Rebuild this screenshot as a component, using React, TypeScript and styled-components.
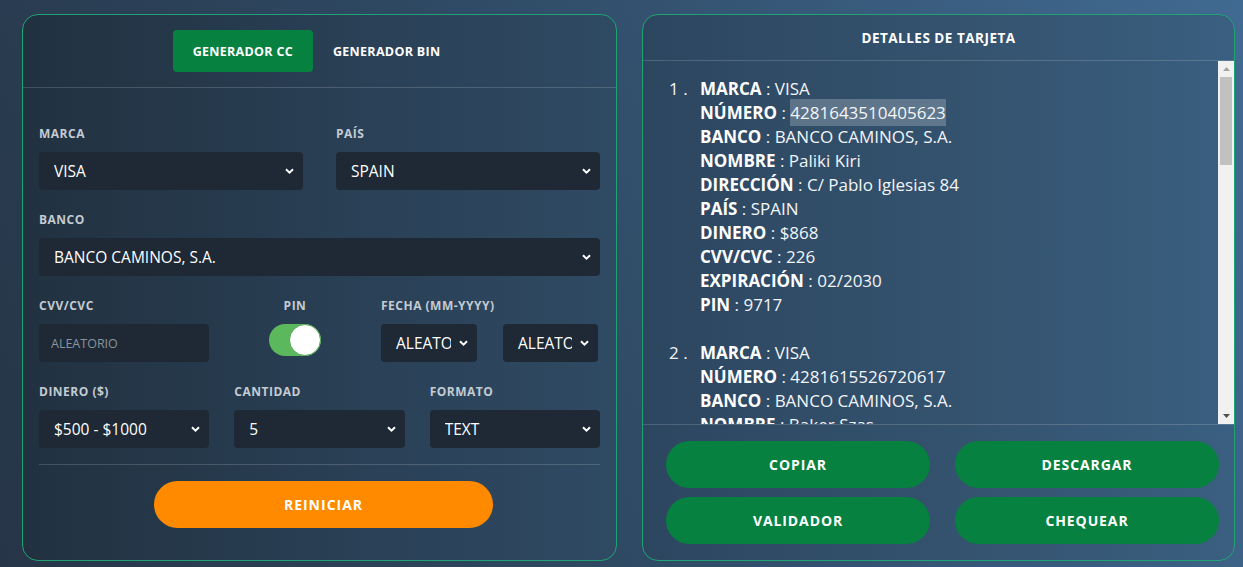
import React from "react";
import styled, { createGlobalStyle } from "styled-components";

const GlobalStyle = createGlobalStyle`
  html, body {
    margin: 0;
    padding: 0;
  }
  body {
    width: 1243px;
    height: 567px;
    overflow: hidden;
    font-family: "Open Sans", "Noto Sans", sans-serif;
    color: #fff;
    background: linear-gradient(70deg, #263547 0%, #2f4a64 45%, #416a92 100%);
  }
`;

const Page = styled.div`
  display: grid;
  grid-template-columns: 595px 593px;
  gap: 25px;
  padding: 14px 8px 6px 22px;
  height: 547px;
`;

const Panel = styled.section<{ $tone: "dark" | "light" }>`
  display: flex;
  flex-direction: column;
  border: 1px solid #1fa374;
  border-radius: 16px;
  overflow: hidden;
  background: ${(p) =>
    p.$tone === "dark"
      ? "linear-gradient(90deg, #213140 0%, #2a4157 60%, #2f4a63 100%)"
      : "linear-gradient(90deg, #2d4660 0%, #34536f 55%, #3a5f80 100%)"};
`;

const Tabs = styled.div`
  display: flex;
  justify-content: center;
  align-items: center;
  height: 72px;
  padding-right: 6px;
  border-bottom: 1px solid rgba(255, 255, 255, 0.16);
`;

const Tab = styled.button<{ $active?: boolean }>`
  height: 42px;
  padding: 0 20px;
  border: none;
  border-radius: 4px;
  background: ${(p) => (p.$active ? "#068140" : "transparent")};
  color: #fff;
  font-family: inherit;
  font-size: 12.5px;
  font-weight: 700;
  letter-spacing: 0.3px;
`;

const Form = styled.div`
  display: flex;
  flex-direction: column;
  gap: 23px;
  padding: 39px 16px 0 16px;
`;

const Row = styled.div<{ $cols: string; $gap?: number }>`
  display: grid;
  grid-template-columns: ${(p) => p.$cols};
  column-gap: ${(p) => p.$gap ?? 25}px;
`;

const Field = styled.div<{ $center?: boolean }>`
  display: flex;
  flex-direction: column;
  align-items: ${(p) => (p.$center ? "center" : "stretch")};
  gap: 11px;
  min-width: 0;
`;

const Label = styled.label`
  font-size: 12px;
  font-weight: 700;
  letter-spacing: 0.5px;
  color: #c3cbd3;
  line-height: 14px;
`;

const SelectWrap = styled.div`
  position: relative;
  min-width: 0;
`;

const Select = styled.select`
  appearance: none;
  width: 100%;
  height: 38px;
  border: none;
  border-radius: 4px;
  background: #1e2935;
  color: #fff;
  font-family: inherit;
  font-size: 15.5px;
  padding: 0 26px 0 15px;
  outline: none;
`;

const Chevron = styled.svg`
  position: absolute;
  right: 9px;
  top: 16px;
  width: 9px;
  height: 6px;
  pointer-events: none;
`;

const Input = styled.input`
  height: 38px;
  border: none;
  border-radius: 4px;
  background: #1e2935;
  color: #fff;
  font-family: inherit;
  font-size: 12.5px;
  padding: 0 12px;
  box-sizing: border-box;
  width: 100%;
  outline: none;
  &::placeholder {
    color: #8a949e;
  }
`;

const DatePair = styled.div`
  display: grid;
  grid-template-columns: 96px 95px;
  column-gap: 26px;
`;

const Toggle = styled.div<{ $on: boolean }>`
  position: relative;
  width: 52px;
  height: 32px;
  border-radius: 16px;
  background: ${(p) => (p.$on ? "#5cb85c" : "#555")};
`;

const Knob = styled.span`
  position: absolute;
  right: 0;
  top: 0;
  width: 30px;
  height: 30px;
  border-radius: 50%;
  background: #fff;
  border: 1px solid #4fa54f;
`;

const Divider = styled.hr`
  margin: -7px 0 0;
  border: none;
  border-top: 1px solid rgba(255, 255, 255, 0.16);
`;

const ResetButton = styled.button`
  align-self: center;
  margin: -7px 0 0 8px;
  width: 339px;
  height: 47px;
  border: none;
  border-radius: 24px;
  background: #ff8a00;
  color: #fff;
  font-family: inherit;
  font-size: 14px;
  font-weight: 700;
  letter-spacing: 1px;
`;

const PanelTitle = styled.div`
  height: 45px;
  display: flex;
  align-items: center;
  justify-content: center;
  font-size: 13.5px;
  font-weight: 700;
  letter-spacing: 0.5px;
  border-bottom: 1px solid rgba(255, 255, 255, 0.16);
`;

const ScrollArea = styled.div`
  display: flex;
  height: 363px;
`;

const Results = styled.div`
  flex: 1;
  overflow: hidden;
  padding: 16px 0 0 26px;
`;

const Scrollbar = styled.div`
  width: 16px;
  flex: none;
  display: flex;
  flex-direction: column;
  align-items: center;
  background: #f1f1f1;
`;

const ArrowCell = styled.div`
  height: 16px;
  display: flex;
  align-items: center;
  justify-content: center;
`;

const Thumb = styled.div`
  width: 12px;
  height: 88px;
  background: #c1c1c1;
`;

const Spacer = styled.div`
  flex: 1;
`;

const CardEntry = styled.div`
  display: flex;
  margin-bottom: 24px;
  font-size: 17px;
  line-height: 24px;
  color: #f2f5f8;
`;

const Index = styled.span`
  width: 31px;
  flex: none;
`;

const Lines = styled.div`
  display: flex;
  flex-direction: column;
  white-space: nowrap;
`;

const Key = styled.b`
  font-weight: 700;
  color: #fff;
`;

const Marked = styled.span`
  background: rgba(255, 255, 255, 0.22);
  padding: 2px 0;
`;

const Actions = styled.div`
  display: grid;
  grid-template-columns: 1fr 1fr;
  gap: 9px 25px;
  padding: 16px 15px 16px 23px;
  border-top: 1px solid rgba(255, 255, 255, 0.16);
`;

const ActionButton = styled.button`
  height: 47px;
  border: none;
  border-radius: 24px;
  background: #068140;
  color: #fff;
  font-family: inherit;
  font-size: 14px;
  font-weight: 700;
  letter-spacing: 0.9px;
`;

const Dropdown = ({ value }: { value: string }) => (
  <SelectWrap>
    <Select defaultValue={value}>
      <option>{value}</option>
    </Select>
    <Chevron viewBox="0 0 9 6">
      <path d="M1 1.2 L4.5 4.6 L8 1.2" fill="none" stroke="#fff" strokeWidth="2" />
    </Chevron>
  </SelectWrap>
);

type Card = {
  numero: string;
  nombre: string;
  direccion: string;
  dinero: string;
  cvv: string;
  exp: string;
  pin: string;
};

const cards: Card[] = [
  { numero: "4281643510405623", nombre: "Paliki Kiri", direccion: "C/ Pablo Iglesias 84", dinero: "$868", cvv: "226", exp: "02/2030", pin: "9717" },
  { numero: "4281615526720617", nombre: "Baker Szas", direccion: "Av. de la Constitución 12", dinero: "$541", cvv: "803", exp: "07/2028", pin: "4402" },
  { numero: "4281639870214459", nombre: "Lucía Moreno", direccion: "C/ Mayor 33", dinero: "$729", cvv: "157", exp: "11/2027", pin: "2086" },
];

export default function App() {
  return (
    <>
      <GlobalStyle />
      <Page>
        <Panel $tone="dark">
          <Tabs>
            <Tab $active>GENERADOR CC</Tab>
            <Tab>GENERADOR BIN</Tab>
          </Tabs>
          <Form>
            <Row $cols="1fr 1fr" $gap={33}>
              <Field>
                <Label>MARCA</Label>
                <Dropdown value="VISA" />
              </Field>
              <Field>
                <Label>PAÍS</Label>
                <Dropdown value="SPAIN" />
              </Field>
            </Row>
            <Row $cols="1fr">
              <Field>
                <Label>BANCO</Label>
                <Dropdown value="BANCO CAMINOS, S.A." />
              </Field>
            </Row>
            <Row $cols="170px 122px 1fr">
              <Field>
                <Label>CVV/CVC</Label>
                <Input placeholder="ALEATORIO" />
              </Field>
              <Field $center>
                <Label>PIN</Label>
                <Toggle $on>
                  <Knob />
                </Toggle>
              </Field>
              <Field>
                <Label>FECHA (MM-YYYY)</Label>
                <DatePair>
                  <Dropdown value="ALEATORIO" />
                  <Dropdown value="ALEATORIO" />
                </DatePair>
              </Field>
            </Row>
            <Row $cols="1fr 1fr 1fr">
              <Field>
                <Label>DINERO ($)</Label>
                <Dropdown value="$500 - $1000" />
              </Field>
              <Field>
                <Label>CANTIDAD</Label>
                <Dropdown value="5" />
              </Field>
              <Field>
                <Label>FORMATO</Label>
                <Dropdown value="TEXT" />
              </Field>
            </Row>
            <Divider />
            <ResetButton>REINICIAR</ResetButton>
          </Form>
        </Panel>

        <Panel $tone="light">
          <PanelTitle>DETALLES DE TARJETA</PanelTitle>
          <ScrollArea>
            <Results>
              {cards.map((c, i) => (
                <CardEntry key={c.numero}>
                  <Index>{i + 1} .</Index>
                  <Lines>
                    <span><Key>MARCA</Key> : VISA</span>
                    <span>
                      <Key>NÚMERO</Key> : {i === 0 ? <Marked>{c.numero}</Marked> : c.numero}
                    </span>
                    <span><Key>BANCO</Key> : BANCO CAMINOS, S.A.</span>
                    <span><Key>NOMBRE</Key> : {c.nombre}</span>
                    <span><Key>DIRECCIÓN</Key> : {c.direccion}</span>
                    <span><Key>PAÍS</Key> : SPAIN</span>
                    <span><Key>DINERO</Key> : {c.dinero}</span>
                    <span><Key>CVV/CVC</Key> : {c.cvv}</span>
                    <span><Key>EXPIRACIÓN</Key> : {c.exp}</span>
                    <span><Key>PIN</Key> : {c.pin}</span>
                  </Lines>
                </CardEntry>
              ))}
            </Results>
            <Scrollbar>
              <ArrowCell>
                <svg width="7" height="4" viewBox="0 0 7 4">
                  <path d="M0 4 L3.5 0 L7 4 Z" fill="#a3a3a3" />
                </svg>
              </ArrowCell>
              <Thumb />
              <Spacer />
              <ArrowCell>
                <svg width="7" height="4" viewBox="0 0 7 4">
                  <path d="M0 0 L3.5 4 L7 0 Z" fill="#505050" />
                </svg>
              </ArrowCell>
            </Scrollbar>
          </ScrollArea>
          <Actions>
            <ActionButton>COPIAR</ActionButton>
            <ActionButton>DESCARGAR</ActionButton>
            <ActionButton>VALIDADOR</ActionButton>
            <ActionButton>CHEQUEAR</ActionButton>
          </Actions>
        </Panel>
      </Page>
    </>
  );
}
